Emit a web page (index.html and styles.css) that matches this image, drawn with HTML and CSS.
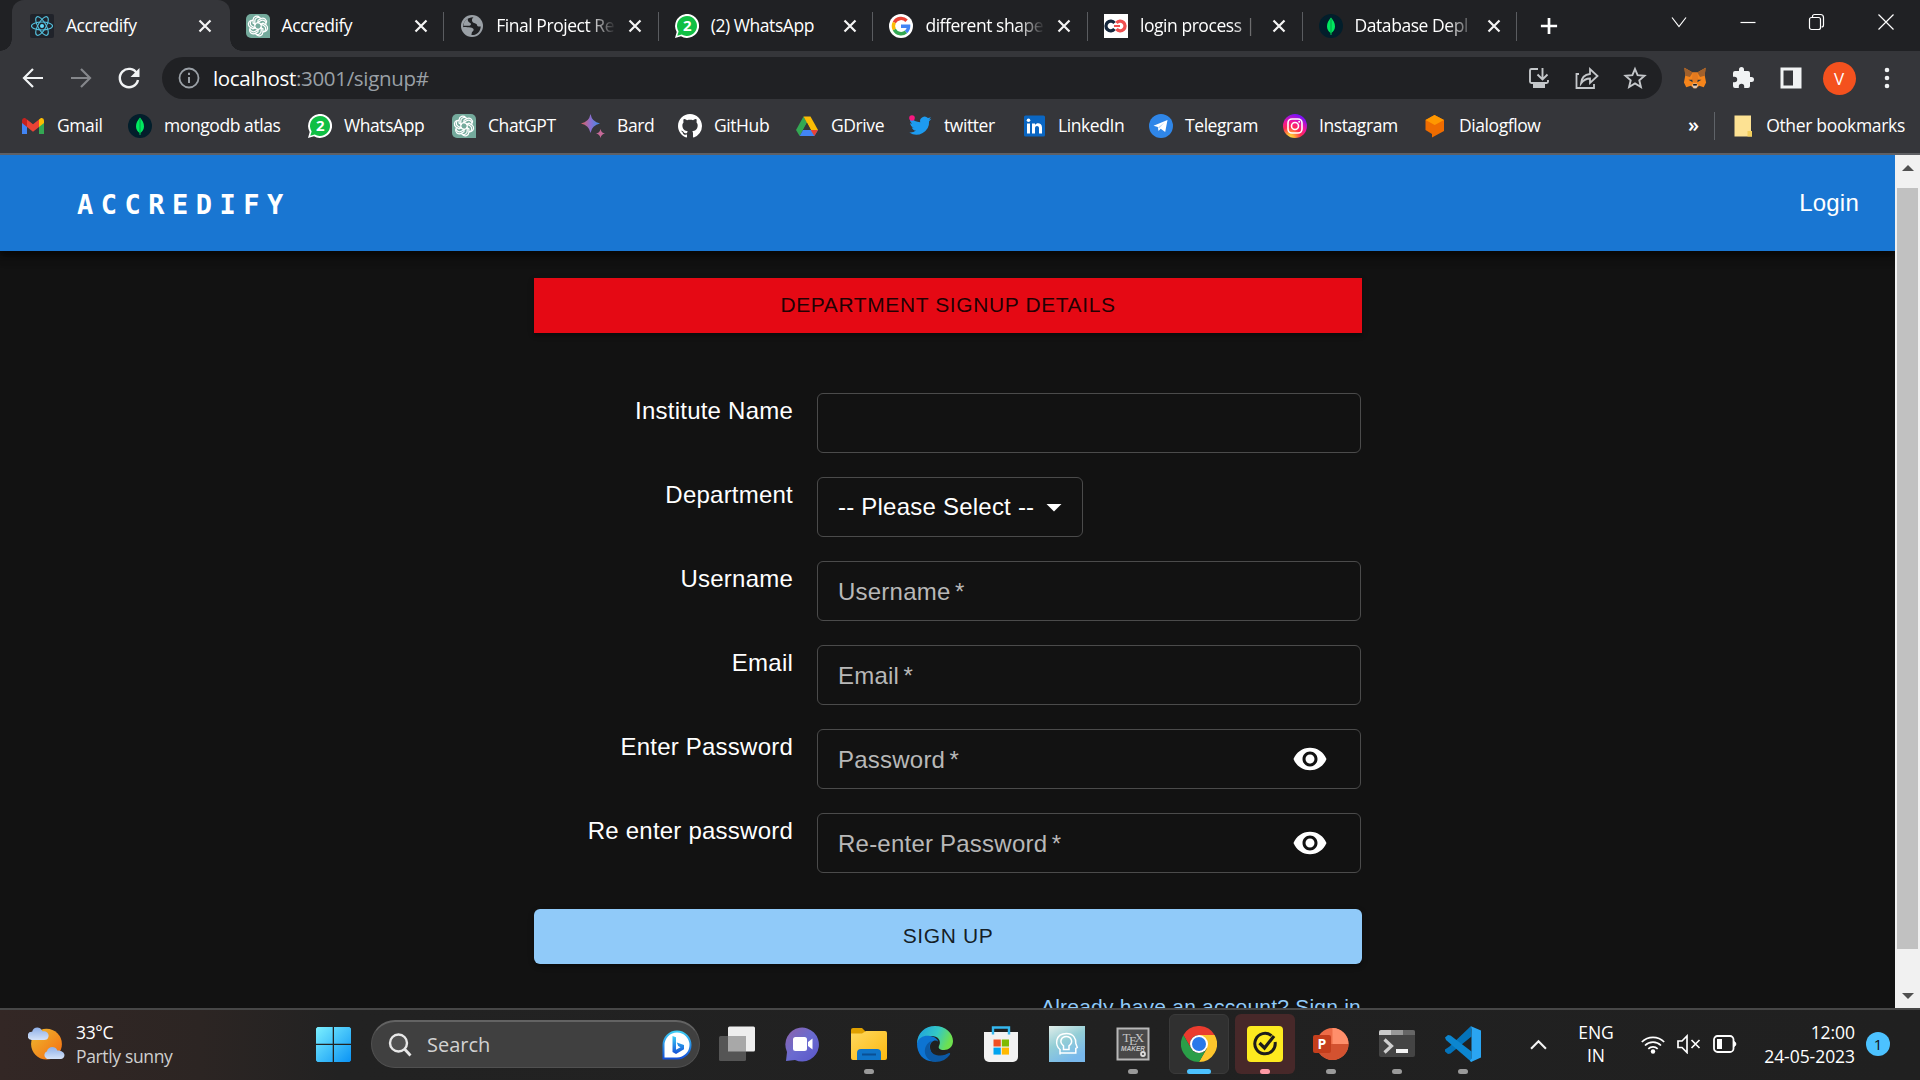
FILE: index.html
```html
<!DOCTYPE html>
<html lang="en">
<head>
<meta charset="utf-8">
<title>Accredify</title>
<link rel="stylesheet" href="styles.css">
</head>
<body>
<svg class="defs" width="0" height="0">
  <defs>
    <linearGradient id="gBard" x1="0" x2="1" y1="0" y2="0"><stop offset="0" stop-color="#e0605a"/><stop offset=".5" stop-color="#8a6fd0"/><stop offset="1" stop-color="#3b8fe8"/></linearGradient>
    <radialGradient id="gInsta" cx=".3" cy="1" r="1"><stop offset="0" stop-color="#fd5"/><stop offset=".15" stop-color="#fb3"/><stop offset=".45" stop-color="#ff2a50"/><stop offset=".7" stop-color="#f0169c"/><stop offset="1" stop-color="#7a12f8"/></radialGradient>
    <linearGradient id="gWin" x1="0" y1="0" x2="1" y2="1"><stop offset="0" stop-color="#7cf0ff"/><stop offset="1" stop-color="#0a93f5"/></linearGradient>
    <linearGradient id="gSun" x1="0" y1="0" x2="1" y2="1"><stop offset="0" stop-color="#eebb30"/><stop offset="1" stop-color="#f56a10"/></linearGradient>
    <linearGradient id="gCloud" x1="0" y1="0" x2="0" y2="1"><stop offset="0" stop-color="#8fb0e8"/><stop offset="1" stop-color="#d4e2f8"/></linearGradient>
    <linearGradient id="gChat" x1="0" y1="0" x2="1" y2="1"><stop offset="0" stop-color="#8e62a8"/><stop offset=".5" stop-color="#6a6bd0"/><stop offset="1" stop-color="#5a55c8"/></linearGradient>
    <linearGradient id="gFolder" x1="0" y1="0" x2="1" y2="1"><stop offset="0" stop-color="#ffd95e"/><stop offset="1" stop-color="#fbb810"/></linearGradient>
    <linearGradient id="gEdge" x1="0" y1="0" x2="1" y2=".3"><stop offset="0" stop-color="#1b9de2"/><stop offset=".6" stop-color="#35c9c4"/><stop offset="1" stop-color="#6ee04f"/></linearGradient>
    <linearGradient id="gHead" x1="0" y1="0" x2=".5" y2="1"><stop offset="0" stop-color="#e2eeea"/><stop offset=".5" stop-color="#93ced6"/><stop offset="1" stop-color="#78b8ec"/></linearGradient>
    <linearGradient id="gBing" x1="0" y1="0" x2="0" y2="1"><stop offset="0" stop-color="#3ccdf5"/><stop offset="1" stop-color="#1450d8"/></linearGradient>
    <symbol id="x" viewBox="0 0 14 14"><path d="M1.500 1.500l11 11m0-11l-11 11" stroke="#f4f4f4" stroke-width="2.200"/></symbol>
    <symbol id="gpt" viewBox="0 0 24 24"><path d="M5 0h14a5 5 0 0 1 5 5v19H5a5 5 0 0 1-5-5V5a5 5 0 0 1 5-5z" fill="#74aa9c"/><g fill="none" stroke="#fff" stroke-width="1.250" stroke-linejoin="round"><path id="petal" d="M12 9.600V6.300l3-1.700a3.700 3.700 0 0 1 5.200 4.400M8.800 13.700V7a3.500 3.500 0 0 1 6-2.500"/><use href="#petal" transform="rotate(60 12 12)"/><use href="#petal" transform="rotate(120 12 12)"/><use href="#petal" transform="rotate(180 12 12)"/><use href="#petal" transform="rotate(240 12 12)"/><use href="#petal" transform="rotate(300 12 12)"/></g></symbol>
    <symbol id="wa" viewBox="0 0 24 24"><path d="M0 24l1.700-6A12 12 0 1 1 6 22.300z" fill="#fff"/><path d="M2.300 21.700l1.300-4.300a10 10 0 1 1 3.200 3.100z" fill="#10bf44"/><text x="12.200" y="17.400" text-anchor="middle" font-family="Open Sans, sans-serif" font-weight="700" font-size="15" fill="#fff">2</text></symbol>
    <symbol id="mongo" viewBox="0 0 24 24"><circle cx="12" cy="12" r="12" fill="#021e2b"/><path d="M12 3.500c2.500 3 4 5.500 4 9 0 3-1.500 5-3.600 6.600V21h-.8v-1.900C9.500 17.500 8 15.500 8 12.500c0-3.500 1.500-6 4-9z" fill="#00e860"/><path d="M12 5v15" stroke="#02913c" stroke-width=".8"/></symbol>
  </defs>
</svg>

<div class="screen">
  <header class="browser">
    <div class="tabstrip">
      <div class="tabs">
        <div class="tab active">
          <svg class="fav" viewBox="0 0 24 24"><rect width="24" height="24" rx="2" fill="#20232a"/><g fill="none" stroke="#53c1de" stroke-width="1.100"><ellipse cx="12" cy="12" rx="10.500" ry="4"/><ellipse cx="12" cy="12" rx="10.500" ry="4" transform="rotate(60 12 12)"/><ellipse cx="12" cy="12" rx="10.500" ry="4" transform="rotate(120 12 12)"/></g><circle cx="12" cy="12" r="2" fill="#61dafb"/></svg>
          <span class="title">Accredify</span><svg class="close"><use href="#x"/></svg>
        </div>
        <div class="tab nosep"><svg class="fav"><use href="#gpt"/></svg><span class="title">Accredify</span><svg class="close"><use href="#x"/></svg></div>
        <div class="tab"><svg class="fav" viewBox="0 0 24 24"><circle cx="12" cy="12" r="11" fill="#9aa0a6"/><path d="M11 3.500L13.500 3.300C11.500 5 11.500 7 13 8.500c1.500 1.200 3.500.5 4 2.500.2 1.500 1.500 1.800 3.800 1.500-.3 3.500-2 6.300-4.800 7.700-1.600.8-3.500 1-4.600.8.500-1.500 0-2.500 1.200-3.500 1.200-.8 1.500-2 .4-3-1.300-1-3.500-1-5.500-1.200-1.500-.1-3-.3-4.400-.1C3 9 5 6 7.500 4.700z" fill="#202124"/><path d="M8 4.200c-1 2 .5 4 2.500 5 1 .7.500 2-1 2.500H3.500C3.500 8 5.500 5.500 8 4.200z" fill="#9aa0a6"/></svg><span class="title fade">Final Project Re</span><svg class="close"><use href="#x"/></svg></div>
        <div class="tab"><svg class="fav"><use href="#wa"/></svg><span class="title">(2) WhatsApp</span><svg class="close"><use href="#x"/></svg></div>
        <div class="tab"><svg class="fav" viewBox="0 0 24 24"><circle cx="12" cy="12" r="12" fill="#fff"/><g fill="none" stroke-width="3.400"><path d="M17.600 6.700A7.700 7.700 0 0 0 5.300 8.500" stroke="#ea4335"/><path d="M5.300 8.500a7.700 7.700 0 0 0 0 7.100" stroke="#fbbc05"/><path d="M5.300 15.600a7.700 7.700 0 0 0 11.700 2.300" stroke="#34a853"/><path d="M17 17.900A7.500 7.500 0 0 0 19.600 12.300H12" stroke="#4285f4"/></g></svg><span class="title fade">different shape</span><svg class="close"><use href="#x"/></svg></div>
        <div class="tab"><svg class="fav" viewBox="0 0 24 24"><path fill="#fff" d="M0 0h24v24H0z"/><g fill="none" stroke-width="3.300"><path d="M10.500 15a4.800 4.800 0 1 1 0-6" stroke="#14263c"/><path d="M12.500 9a4.800 4.800 0 1 1 0 6" stroke="#f05050"/><path d="M10 12h6" stroke="#f05050" stroke-width="2"/></g></svg><span class="title fade">login process |</span><svg class="close"><use href="#x"/></svg></div>
        <div class="tab"><svg class="fav"><use href="#mongo"/></svg><span class="title fade">Database Depl</span><svg class="close"><use href="#x"/></svg></div>
      </div>
      <svg class="newtab" viewBox="0 0 20 20"><path d="M10 1v18M1 10h18" stroke="#fff" stroke-width="3"/></svg>
      <div class="winctl">
        <svg viewBox="0 0 20 20"><path d="M3 5.500l7 9 7-9" class="wline"/></svg>
        <svg viewBox="0 0 20 20"><path d="M2.500 10.500h15" class="wline"/></svg>
        <svg viewBox="0 0 20 20"><rect x="2.500" y="5.500" width="11" height="12" rx="2" class="wline"/><path d="M5.500 5.500v-1c0-1 .8-2 2-2h6c2 0 3 1 3 3v7.500c0 1-1 2-2 2" class="wline"/></svg>
        <svg viewBox="0 0 20 20"><path d="M2.500 2.500l15 15m0-15l-15 15" class="wline"/></svg>
      </div>
    </div>

    <div class="toolbar">
      <div class="nav">
        <svg viewBox="0 0 24 24"><path d="M22 12H3.500M12 3l-9 9 9 9" fill="none" stroke="#f1f3f4" stroke-width="2.200"/></svg>
        <svg viewBox="0 0 24 24"><path d="M2 12h18.500M12 3l9 9-9 9" fill="none" stroke="#85878b" stroke-width="2.200"/></svg>
        <svg viewBox="0 0 24 24"><path d="M20 7.500A9.200 9.200 0 1 0 21 14" fill="none" stroke="#f1f3f4" stroke-width="2.400"/><path d="M22.500 2v9h-9z" fill="#f1f3f4"/></svg>
      </div>
      <div class="omnibox">
        <svg class="info" viewBox="0 0 22 22"><circle cx="11" cy="11" r="9.500" fill="none" stroke="#9aa0a6" stroke-width="1.800"/><path d="M11 10v6M11 5.800v2.200" stroke="#9aa0a6" stroke-width="2"/></svg>
        <div class="url"><span class="host">localhost</span>:3001/signup#</div>
        <div class="omni-icons">
          <svg viewBox="0 0 24 24"><path d="M11 3H4.500Q3 3 3 4.500v11Q3 17 4.500 17h15q1.500 0 1.500-1.500V14M15.500 2v10.500M10.500 8.500l5 5 5-5" fill="none" stroke="#c4c7ca" stroke-width="1.900"/><path d="M6 18h12v4H6z" fill="#c4c7ca"/></svg>
          <svg viewBox="0 0 24 24"><path d="M4 8H1.500v14H19v-4" fill="none" stroke="#c4c7ca" stroke-width="1.800"/><path d="M6 17.500C6.500 12 9 8.500 15 8V3l7.500 7-7.500 7v-4.500c-4 0-6.500 1.500-9 5z" fill="none" stroke="#c4c7ca" stroke-width="1.800"/></svg>
          <svg viewBox="0 0 24 24"><path d="M12 3l2.600 6.200 6.900.6-5.200 4.500 1.600 6.700-5.900-3.600L6.100 21l1.600-6.700-5.200-4.500 6.900-.6z" fill="none" stroke="#c4c7ca" stroke-width="1.900"/></svg>
        </div>
      </div>
      <div class="ext">
        <svg viewBox="0 0 26 26"><path d="M1.500 2l9 5h5l9-5-1 8 1.500 8-2.500 5-5-1.500-3 2.500h-3l-3-2.500-5 1.500L1 18l1.500-8z" fill="#f6851b"/><path d="M1.500 2l9 5-3 5-5-1.500zM24.500 2l-9 5 3 5 5-1.500z" fill="#a0602c"/><path d="M10.500 7h5l1 9-3.500 2-3.500-2z" fill="#e47a1f"/><path d="M6 15l4 0 .5 2.500zM20 15h-4l-.5 2.500z" fill="#233447"/><path d="M10 21l1-2h4l1 2-1.500 3h-3z" fill="#d9c8bb"/><path d="M11 19.500h4v1.700h-4z" fill="#161616"/></svg>
        <svg viewBox="0 0 24 24"><path d="M20.500 11H19V7a2 2 0 0 0-2-2h-4V3.500a2.500 2.500 0 0 0-5 0V5H4a2 2 0 0 0-2 2v3.800h1.500a2.700 2.700 0 0 1 0 5.400H2V20a2 2 0 0 0 2 2h3.800v-1.500a2.700 2.700 0 0 1 5.400 0V22H17a2 2 0 0 0 2-2v-4h1.500a2.500 2.500 0 0 0 0-5z" fill="#f1f3f4"/></svg>
        <svg viewBox="0 0 24 24"><path d="M1.500 1.500h21v21h-21zM4.500 4.500v15H14v-15z" fill="#f1f3f4" fill-rule="evenodd"/></svg>
        <span class="avatar">V</span>
        <svg viewBox="0 0 24 24"><g fill="#f1f3f4"><circle cx="12" cy="4" r="2.300"/><circle cx="12" cy="12" r="2.300"/><circle cx="12" cy="20" r="2.300"/></g></svg>
      </div>
    </div>

    <div class="bookmarks">
      <div class="marks">
        <div class="mark"><svg viewBox="0 0 24 24"><path d="M1 6v14h5V10z" fill="#4285f4"/><path d="M23 6v14h-5V10z" fill="#34a853"/><path d="M1 6.500Q1 3.500 4 4l2 1.500V13L1 9z" fill="#c5221f"/><path d="M23 6.500q0-3-3-2.500l-2 1.500V13l5-4z" fill="#fbbc04"/><path d="M6 5.500l6 4.700 6-4.700V13l-6 4.700L6 13z" fill="#ea4335"/></svg><span>Gmail</span></div>
        <div class="mark"><svg><use href="#mongo"/></svg><span>mongodb atlas</span></div>
        <div class="mark"><svg><use href="#wa"/></svg><span>WhatsApp</span></div>
        <div class="mark"><svg><use href="#gpt"/></svg><span>ChatGPT</span></div>
        <div class="mark"><svg viewBox="0 0 24 24"><path d="M9.500 0q1.500 8 9.500 9.500Q11 11 9.500 19 8 11 0 9.500 8 8 9.500 0z" fill="url(#gBard)"/><path d="M19.500 15q.8 4 4.500 4.500-3.700.5-4.500 4.500-.8-4-4.500-4.500 3.700-.5 4.500-4.500z" fill="#c56a98"/></svg><span>Bard</span></div>
        <div class="mark"><svg viewBox="0 0 16 16"><path fill="#fff" d="M8 0C3.580 0 0 3.580 0 8c0 3.540 2.290 6.530 5.470 7.590.4.070.55-.17.55-.38 0-.19-.01-.82-.01-1.490-2.010.37-2.530-.49-2.690-.94-.09-.23-.48-.94-.82-1.130-.28-.15-.68-.52-.01-.53.63-.01 1.080.58 1.230.82.72 1.210 1.870.87 2.330.66.070-.52.280-.87.51-1.070-1.780-.2-3.640-.89-3.640-3.950 0-.87.31-1.590.82-2.150-.08-.2-.36-1.020.08-2.120 0 0 .67-.21 2.200.82.64-.18 1.320-.27 2-.27s1.360.09 2 .27c1.530-1.040 2.200-.82 2.200-.82.44 1.100.16 1.920.08 2.120.51.56.82 1.270.82 2.150 0 3.070-1.870 3.750-3.650 3.950.29.25.54.73.54 1.480 0 1.070-.01 1.930-.01 2.200 0 .21.15.46.55.38A8.010 8.010 0 0 0 16 8c0-4.420-3.580-8-8-8z"/></svg><span>GitHub</span></div>
        <div class="mark"><svg viewBox="0 0 24 24"><path d="M8.500 2.500L1 16l3.700 6L12 8.700z" fill="#34a853"/><path d="M8.500 2.500h7L23 16h-7.300z" fill="#fbbc04"/><path d="M8 16h15l-3.700 6H4.700z" fill="#4285f4"/><path d="M15.700 16H23l-3.700 6z" fill="#ea4335"/><path d="M12 8.700L8 16h8z" fill="#35363a"/></svg><span>GDrive</span></div>
        <div class="mark"><svg viewBox="0 0 24 24"><path fill="#1d9bf0" d="M23.400 4.800a9 9 0 0 1-2.600.7 4.500 4.500 0 0 0 2-2.500 9 9 0 0 1-2.900 1.100 4.500 4.500 0 0 0-7.700 4.100A12.800 12.800 0 0 1 2.800 3.500a4.500 4.500 0 0 0 1.400 6 4.500 4.500 0 0 1-2-.6c0 2.200 1.500 4.100 3.600 4.500a4.500 4.500 0 0 1-2 .1 4.500 4.500 0 0 0 4.200 3.100A9 9 0 0 1 1.300 18.500a12.800 12.800 0 0 0 19.800-11.300 9 9 0 0 0 2.300-2.400z"/><circle cx="4" cy="4" r="2.800" fill="#f91880"/></svg><span>twitter</span></div>
        <div class="mark"><svg viewBox="0 0 24 24"><rect x="2" y="1.500" width="21" height="21" rx="1.500" fill="#0a66c2"/><g fill="#fff"><path d="M5 9.500h3v10H5zM10 9.500h3v1.400c1.600-2.600 7-2.400 7 2.600v6h-3v-5.300c0-3-4-3-4 0v5.300h-3z"/><circle cx="6.500" cy="6.300" r="1.800"/></g></svg><span>LinkedIn</span></div>
        <div class="mark"><svg viewBox="0 0 24 24"><circle cx="12" cy="12" r="12" fill="#2f86e8"/><path d="M4.500 11.700L18.500 6l-2.300 12-4.500-3.200-2.200 2.200-.7-4z" fill="#fff"/><path d="M9 13.500L15.500 8.500l-5.500 6z" fill="#b8d4f5"/></svg><span>Telegram</span></div>
        <div class="mark"><svg viewBox="0 0 24 24"><circle cx="12" cy="12" r="12" fill="url(#gInsta)"/><g fill="none" stroke="#fff" stroke-width="1.600"><rect x="5" y="5" width="14" height="14" rx="4"/><circle cx="12" cy="12" r="3.500"/></g><circle cx="16.200" cy="7.800" r="1" fill="#fff"/></svg><span>Instagram</span></div>
        <div class="mark"><svg viewBox="0 0 24 24"><path d="M2.500 6l9-5 9.500 5v11l-12 6.500v-3.500L2.500 16z" fill="#ef6c00"/><path d="M2.500 6l9-5 9.500 5-9.300 5z" fill="#ff9800"/></svg><span>Dialogflow</span></div>
      </div>
      <span class="more">»</span>
      <div class="mark other"><svg viewBox="0 0 24 24"><path d="M1.500 1.500H18V18h1v4.500H1.500z" fill="#fde293"/><path d="M14.500 22.500v-5.500h4.500v5.500z" fill="#f3cf5c"/></svg><span>Other bookmarks</span></div>
    </div>
  </header>

  <main class="viewport">
    <div class="page">
      <nav class="appbar"><span class="brand">ACCREDIFY</span><a class="login">Login</a></nav>
      <form class="form">
        <div class="btn heading">DEPARTMENT SIGNUP DETAILS</div>
        <div class="fields">
          <label>Institute Name</label><div class="input"></div>
          <label>Department</label><div class="input select"><span>-- Please Select --</span><svg viewBox="0 0 24 24"><path d="M7 10l5 5 5-5z" fill="#fff"/></svg></div>
          <label>Username</label><div class="input"><span class="hint">Username <span class="req">*</span></span></div>
          <label>Email</label><div class="input"><span class="hint">Email <span class="req">*</span></span></div>
          <label>Enter Password</label><div class="input"><span class="hint">Password <span class="req">*</span></span><svg class="eye" viewBox="0 0 24 24"><path id="eye" fill="#fff" d="M12 4.500C7 4.500 2.730 7.610 1 12c1.730 4.390 6 7.500 11 7.500s9.270-3.110 11-7.500c-1.730-4.390-6-7.500-11-7.500zM12 17c-2.760 0-5-2.240-5-5s2.240-5 5-5 5 2.240 5 5-2.240 5-5 5zm0-8c-1.660 0-3 1.340-3 3s1.340 3 3 3 3-1.340 3-3-1.340-3-3-3z"/></svg></div>
          <label>Re enter password</label><div class="input"><span class="hint">Re-enter Password <span class="req">*</span></span><svg class="eye" viewBox="0 0 24 24"><use href="#eye"/></svg></div>
        </div>
        <div class="btn submit">SIGN UP</div>
        <a class="signin">Already have an account? Sign in</a>
      </form>
    </div>
    <div class="scrollbar">
      <svg viewBox="0 0 12 6"><path d="M0 6l6-6 6 6z" fill="#505050"/></svg>
      <div class="thumb"></div>
      <svg viewBox="0 0 12 6"><path d="M0 0l6 6 6-6z" fill="#505050"/></svg>
    </div>
  </main>

  <footer class="taskbar">
    <div class="weather">
      <svg viewBox="0 0 36 36"><circle cx="18" cy="19.500" r="15" fill="url(#gSun)"/><path d="M3.500 15.500a4 4 0 0 1 .5-8C5 3 11.500 1.500 14 7c4-.5 6.500 2 6 5s-2 3.500-4 3.500z" fill="url(#gCloud)"/><path d="M18.500 34a4 4 0 0 1 0-7.500c.5-4.500 8-6 10-.8 4-.2 7 2 7 4.500S33.500 34 32 34z" fill="url(#gCloud)"/></svg>
      <div><div>33°C</div><div class="dim">Partly sunny</div></div>
    </div>
    <svg class="start" viewBox="0 0 35 35"><path fill="url(#gWin)" d="M1.500 0H16.700V16.700H0V1.500zM18 0H33.500L35 1.500V16.700H18zM0 18H16.700V35H1.500L0 33.500zM18 18H35V33.500L33.500 35H18z"/></svg>
    <div class="search">
      <svg viewBox="0 0 24 24"><circle cx="10.500" cy="10" r="8.500" fill="#ffffff18" stroke="#e8e8e8" stroke-width="2.400"/><path d="M16.500 16l6 6.500" stroke="#e8e8e8" stroke-width="2.800"/></svg>
      <span>Search</span>
      <svg class="bing" viewBox="0 0 30 30"><path d="M1.500 28.500V15A13.500 13.500 0 1 1 15 28.500z" fill="#fff" stroke="url(#gBing)" stroke-width="2"/><path d="M10.500 6l3.500 1.300v12.500l4.500-2.600-2.300-1.200-1.400-3.600 7.200 2.600v4.200L14 24l-3.500-2z" fill="url(#gBing)"/></svg>
    </div>
    <div class="apps">
      <div class="app"><svg viewBox="0 0 36 36"><rect x="9" y="0.500" width="27" height="25" rx="1.500" fill="#eee"/><rect x="0" y="10" width="27" height="25" rx="1.500" fill="#555"/><path d="M9 10h18v15.500H9z" fill="#a8a8a8"/></svg></div>
      <div class="app"><svg viewBox="0 0 36 36"><path d="M1 35l1-9A16.800 17 0 1 1 10 34z" fill="url(#gChat)"/><rect x="8" y="11" width="14" height="14" rx="2.500" fill="#fff"/><path d="M23 16l4.500-3.500v11L23 20z" fill="#fff"/></svg></div>
      <div class="app"><svg viewBox="0 0 36 36"><path d="M0 4a2 2 0 0 1 2-2h9l4 4-3 6H0z" fill="#e0a000"/><path d="M0 7.500h11L15 5h19a2 2 0 0 1 2 2v25a2 2 0 0 1-2 2H2a2 2 0 0 1-2-2z" fill="url(#gFolder)"/><path d="M6 34v-7a4 4 0 0 1 4-4h16a4 4 0 0 1 4 4v7z" fill="#0f74c8"/><path d="M11 28.500h14" stroke="#0a4f93" stroke-width="2"/></svg><i class="dot"></i></div>
      <div class="app"><svg viewBox="0 0 36 36"><path d="M0 18C0 7 8 0 18 0c11 0 18 7.500 18 15 0 6-4.500 9-9 9s-6-2-5-4c3-6-2-10-7-10S3 13 0 18z" fill="url(#gEdge)"/><path d="M0 18c1-7 8-9 13-8 6 1 8 4 8 6-2-3-8-1-8 5 0 8 7 11 12 10-3 3-6 4.500-9 4.500C6 35.500 0 27 0 18z" fill="#0d74d2"/><path d="M15 15c-4 3-3 12 4 14 6 1.500 10-.5 13-2 1 0 1.500.5 1 1.500C30 33 25 36 18 36 10 35 7 28 8 23s5-8 7-8z" fill="#0c59a4"/><path d="M21 16c1.500 2-1 3.500-.5 5.500S24 25 27 24c-4 3-12 1-12-5 0-3 4-5 6-3z" fill="#202020"/></svg></div>
      <div class="app"><svg viewBox="0 0 36 36"><path d="M1 6h34v25a5 5 0 0 1-5 5H6a5 5 0 0 1-5-5z" fill="#f2f2f2"/><path d="M10 8.500V1.500h16v7" fill="none" stroke="#35b8f0" stroke-width="2.400"/><path d="M10.500 13.500h7.300v7h-7.300z" fill="#f25022"/><path d="M18.800 13.500H26v7h-7.200z" fill="#7fba00"/><path d="M10.500 21.600h7.300v7h-7.300z" fill="#00a4ef"/><path d="M18.800 21.600H26v7h-7.200z" fill="#ffb900"/></svg></div>
      <div class="app"><svg viewBox="0 0 36 36"><path d="M0 0h36v36H0z" fill="url(#gHead)"/><g fill="none" stroke="#fff" stroke-width="1.500"><path d="M11 28.500V23.500C6 20 5.500 7.500 17.500 7.500c7 0 9.500 5 9.300 10l1.500 4-1.500 1v4.500H11"/><path d="M14.500 23.500v-3.700c-5-4-2-9.300 2.800-9.300s7.700 5.300 2.700 9.300v3.700z"/></g></svg></div>
      <div class="app"><svg viewBox="0 0 36 36"><path d="M2.500 2.500h31v31h-31z" fill="#484848" stroke="#b8b8b8" stroke-width="2"/><g fill="#c4c4c4" text-anchor="middle"><text x="11.500" y="15.500" font-family="Liberation Serif, serif" font-size="13">T</text><text x="18" y="19" font-family="Liberation Serif, serif" font-size="13">E</text><text x="24.500" y="15.500" font-family="Liberation Serif, serif" font-size="13">X</text><text x="18" y="24.500" font-family="Liberation Sans, sans-serif" font-style="italic" font-weight="700" font-size="6.500">MAKER</text></g><circle cx="28" cy="28" r="2" fill="none" stroke="#ddd" stroke-width="1.800"/></svg><i class="dot"></i></div>
      <div class="app current"><svg viewBox="0 0 36 36"><path d="M2.400 9A18 18 0 0 1 33.600 9H18a9 9 0 0 0-7.800 13.500z" fill="#ea3b2e"/><path d="M18 9h15.600A18 18 0 0 1 18 36l7.800-13.500z" fill="#fdc52c"/><path d="M2.400 9l7.800 13.500a9 9 0 0 0 15.600 0L18 36A18 18 0 0 1 2.400 9z" fill="#2a9e48"/><circle cx="18" cy="18" r="9" fill="#fff"/><circle cx="18" cy="18" r="7" fill="#2878ea"/></svg><i class="dot"></i></div>
      <div class="app alert"><svg viewBox="0 0 36 36"><rect width="36" height="36" rx="4" fill="#fdea1f"/><path d="M24.500 9.700A10.200 10.200 0 1 0 28.100 16" fill="none" stroke="#1c1c1c" stroke-width="3"/><path d="M12.500 17l5 5L27 10" fill="none" stroke="#1c1c1c" stroke-width="3.200"/></svg><i class="dot"></i></div>
      <div class="app"><svg viewBox="0 0 36 36"><circle cx="19.500" cy="18" r="16" fill="#ed6c47"/><path d="M19.500 2a16 16 0 0 1 16 16h-16z" fill="#ff8f6b"/><path d="M3.500 18h32a16 16 0 0 1-32 0z" fill="#d35230"/><rect x="0" y="9" width="18" height="18" rx="2" fill="#c43e1c"/><text x="9" y="23" text-anchor="middle" font-family="Open Sans, sans-serif" font-weight="700" font-size="14" fill="#fff">P</text></svg><i class="dot"></i></div>
      <div class="app"><svg viewBox="0 0 36 36"><rect y="4" width="36" height="27" rx="2" fill="#444"/><path d="M0 6a2 2 0 0 1 2-2h10v5H0z" fill="#ccc"/><path d="M12 4h12v5H12z" fill="#999"/><path d="M24 4h10a2 2 0 0 1 2 2v3H24z" fill="#666"/><path d="M5.500 13.500l7 6.500-7 6.500" fill="none" stroke="#d0d0d0" stroke-width="3.200"/><path d="M17 23h12v4H17z" fill="#f4f4f4"/></svg><i class="dot"></i></div>
      <div class="app"><svg viewBox="0 0 36 36"><path d="M26 0L4.500 20.500 0 23.500v2L3 28l2.500-.5L26.500 10.500z" fill="#0473ba"/><path d="M0 11.500L3 9l2.500.5L26.500 25.500V36L1 14z" fill="#0c86d0"/><path d="M26 0.300L36 4.500v27L26 36l-1-1.500 1.500-2v-29z" fill="#2aa5f2"/></svg><i class="dot"></i></div>
    </div>
    <div class="tray">
      <svg class="chev" viewBox="0 0 16 10"><path d="M1 9l7-7 7 7" fill="none" stroke="#f4f4f4" stroke-width="2"/></svg>
      <div class="lang"><div>ENG</div><div>IN</div></div>
      <div class="status">
        <svg viewBox="0 0 24 20"><g fill="none" stroke="#fff" stroke-width="1.700"><path d="M.8 8a16 16 0 0 1 22.400 0M4 11.500a11.300 11.300 0 0 1 16 0M7.300 14.800a6.700 6.700 0 0 1 9.400 0"/></g><circle cx="12" cy="17.500" r="2.200" fill="#fff"/></svg>
        <svg viewBox="0 0 24 20"><path d="M1 7h4l5-5v16.500l-5-5H1zM14.500 6l8 8m0-8l-8 8" fill="none" stroke="#fff" stroke-width="1.700"/></svg>
        <svg viewBox="0 0 24 20"><rect x="1" y="2" width="19.500" height="16" rx="3.500" fill="none" stroke="#fff" stroke-width="1.800"/><path d="M4 5h5v10H4z" fill="#fff"/><path d="M21.500 7.500q3 2.500 0 5z" fill="#fff" stroke="#fff"/></svg>
      </div>
      <div class="clock"><div>12:00</div><div>24-05-2023</div></div>
      <span class="notif">1</span>
    </div>
  </footer>
</div>
</body>
</html>
```
FILE: styles.css
```css
* { box-sizing: border-box; }
body { margin: 0; background: #121212; overflow: hidden; }
svg { flex: none; display: block; }
.defs { position: absolute; }

.screen {
  width: 1920px;
  height: 1080px;
  display: flex;
  flex-direction: column;
  overflow: hidden;
  font-family: "Open Sans", "Noto Sans", sans-serif;
  font-size: 17.500px;
  color: #fff;
}

/* Browser chrome */
.browser { height: 155px; flex: none; background: #35363a; border-bottom: 2px solid #5f6064; }
.tabstrip { height: 51px; background: #202124; display: flex; align-items: center; padding-left: 15px; }
.tabs { display: grid; grid-template-columns: repeat(7, 214.600px); height: 51px; }
.tab { display: flex; align-items: center; padding-left: 16px; position: relative; }
.tab::after { content: ""; position: absolute; right: 0; top: 12px; height: 29px; width: 1px; background: #5a5c60; }
.tab.active::after { display: none; }
.tab.active { background: #35363a; border-radius: 12px 12px 0 0; margin-left: -3px; padding-left: 18px; }
.tab.active::before {
  content: ""; position: absolute; bottom: 0; left: -12px; right: -12px; height: 12px;
  background:
    radial-gradient(circle at 0 0, transparent 11.500px, #35363a 12px) left / 12px 12px no-repeat,
    radial-gradient(circle at 100% 0, transparent 11.500px, #35363a 12px) right / 12px 12px no-repeat;
}
.fav { width: 24px; height: 24px; }
.title { width: 120px; margin-left: 12px; padding-bottom: 1px; white-space: nowrap; letter-spacing: -.450px; }
.title.fade { -webkit-mask-image: linear-gradient(90deg, #000 77%, transparent 100%); mask-image: linear-gradient(90deg, #000 77%, transparent 100%); }
.close { width: 14px; height: 14px; margin-left: 12px; }
.newtab { width: 18px; height: 18px; margin-left: 23px; }
.winctl { margin-left: auto; display: flex; gap: 49px; padding: 0 24px 8px 0; }
.winctl svg { width: 20px; height: 20px; }
.wline { fill: none; stroke: #fff; stroke-width: 1.200; }

.toolbar { height: 54px; display: flex; align-items: center; }
.nav { width: 162px; padding-left: 21px; display: flex; gap: 24px; }
.nav svg { width: 24px; height: 24px; }
.omnibox { width: 1500px; height: 42px; border-radius: 21px; background: #202124; display: flex; align-items: center; padding: 0 15px 0 16px; }
.info { width: 22px; height: 22px; }
.url { margin-left: 13px; font-size: 20.500px; letter-spacing: -.320px; color: #9aa0a6; padding-bottom: 1px; }
.host { color: #fff; }
.omni-icons { margin-left: auto; display: flex; gap: 24px; }
.omni-icons svg { width: 24px; height: 24px; }
.ext { display: flex; align-items: center; margin-left: 21px; gap: 24px; }
.ext svg { width: 24px; height: 24px; }
.ext .avatar { margin: 0 -4.500px; }
.avatar { width: 33px; height: 33px; border-radius: 50%; background: #f4511e; text-align: center; line-height: 33px; font-size: 17px; }

.bookmarks { height: 42px; display: flex; align-items: center; padding-left: 21px; }
.marks { display: grid; grid-template-columns: 107px 180px 144px 129px 97px 117px 113px 114px 127px 134px 140px auto; }
.mark { display: flex; align-items: center; gap: 12px; white-space: nowrap; letter-spacing: -.420px; }
.mark span { padding-bottom: 2px; }
.mark svg { width: 24px; height: 24px; }
.more { margin-left: auto; font-size: 20px; font-weight: 600; padding: 0 15px 4px 0; }
.other { border-left: 1px solid #5f6368; height: 28px; padding: 0 15px 0 18px; gap: 9px; letter-spacing: -.320px; }

/* Web page */
.viewport { flex: 1; min-height: 0; display: flex; overflow: hidden; }
.page { width: 1895px; height: 853px; overflow: hidden; font-family: "Liberation Sans", Arial, sans-serif; font-size: 24px; letter-spacing: .225px; }
.appbar { height: 96px; background: #1976d2; box-shadow: 0 3px 6px rgba(0,0,0,.4), 0 6px 8px rgba(0,0,0,.28), 0 2px 15px rgba(0,0,0,.24); display: flex; align-items: center; justify-content: space-between; padding: 0 36px 0 77px; }
.brand { font: 700 27px "DejaVu Sans Mono", monospace; letter-spacing: 7.500px; padding-top: 2px; }
.form { width: 828px; margin: 27px 0 0 534px; display: flex; flex-direction: column; }
.btn { height: 55px; display: flex; align-items: center; justify-content: center; padding-bottom: 2px; font-size: 21px; letter-spacing: .600px; color: rgba(0,0,0,.87); box-shadow: 0 3px 2px rgba(0,0,0,.2), 0 2px 7px rgba(0,0,0,.14); }
.heading { background: #e50914; }
.fields { margin: 60px 1px 36px 0; display: grid; grid-template-columns: 259px 544px; column-gap: 24px; row-gap: 24px; }
.fields label { text-align: right; line-height: 36px; }
.input { height: 60px; border: 1px solid #4b4b4b; border-radius: 6px; padding: 0 32px 0 20px; display: flex; align-items: center; justify-content: space-between; color: #b8b8b8; }
.hint { padding-top: 2px; }
.req { margin-left: -2.500px; }
.eye { width: 36px; height: 36px; }
.select { width: 266px; padding: 0 10px 0 20px; color: #fff; }
.select svg { width: 36px; height: 36px; }
.submit { background: #90caf9; border-radius: 6px; }
.signin { margin: 27px 1px 0 0; text-align: right; font-size: 21px; line-height: 31px; color: #90caf9; }

.scrollbar { width: 25px; background: #f1f1f1; display: flex; flex-direction: column; align-items: center; padding: 10px 0 9px; }
.scrollbar svg { width: 12px; height: 6px; }
.thumb { width: 21px; height: 761px; margin-top: 17px; margin-bottom: auto; background: #c1c1c1; }

/* Taskbar */
.taskbar { height: 72px; flex: none; border-top: 2px solid #474747; padding-bottom: 2px; background: linear-gradient(90deg, #332725, #2c2523 200px, #222 340px, #202020); display: flex; align-items: center; }
.weather { width: 316px; padding-left: 28px; display: flex; align-items: center; gap: 11px; line-height: 24px; letter-spacing: -.350px; }
.weather svg { width: 37px; height: 37px; margin-bottom: 4px; }
.dim { color: #d0d0d0; }
.start { width: 35px; height: 35px; }
.search { width: 329px; height: 48px; margin-left: 20px; border-radius: 24px; background: #404040; border: 1px solid #505050; border-top: 2px solid #636363; display: flex; align-items: center; padding: 0 7px 0 16px; font-size: 20px; color: #d2d2d2; }
.search svg { width: 24px; height: 24px; }
.search span { margin-left: 15px; padding-bottom: 1px; }
.search .bing { width: 30px; height: 30px; margin-left: auto; }
.apps { display: flex; gap: 6px; margin-left: 7px; }
.app { width: 60px; height: 60px; border-radius: 6px; display: flex; justify-content: center; padding-top: 12px; position: relative; }
.app svg { width: 36px; height: 36px; }
.dot { position: absolute; bottom: 0; left: 25px; width: 10px; height: 5px; border-radius: 3px; background: #9a9a9a; }
.current { background: #303030; border: 1px solid #3a3a3a; padding-top: 11px; }
.current .dot { width: 24px; left: 17px; bottom: -1px; background: #4cc2ff; }
.alert { background: #472829; }
.alert .dot { background: #ff99a4; }
.tray { flex: 1; display: flex; align-items: center; line-height: 24px; }
.chev { width: 17px; height: 11px; margin-left: 37px; }
.lang { width: 50px; margin-left: 24px; text-align: center; line-height: 23px; }
.status { display: flex; gap: 12px; margin-left: 20px; }
.status svg { width: 24px; height: 20px; }
.clock { margin-left: auto; text-align: right; letter-spacing: -.050px; }
.notif { margin: 0 30px 0 11px; width: 24px; height: 24px; border-radius: 50%; background: #4cc2ff; color: #111; text-align: center; font-size: 15px; line-height: 24px; }
```
